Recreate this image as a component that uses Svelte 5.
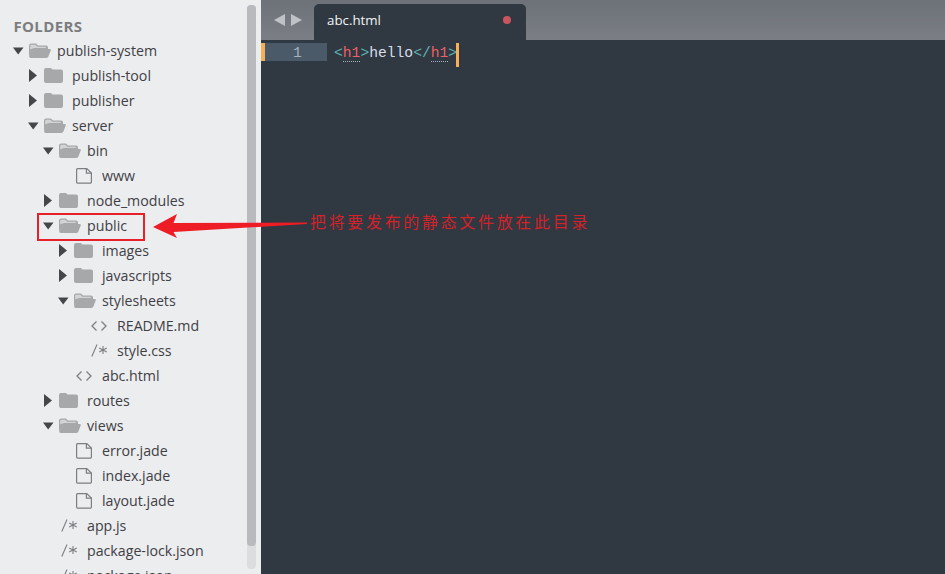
<script>
  const rows = [
    { n: 'publish-system', d: 0, k: 'open' },
    { n: 'publish-tool', d: 1, k: 'closed' },
    { n: 'publisher', d: 1, k: 'closed' },
    { n: 'server', d: 1, k: 'open' },
    { n: 'bin', d: 2, k: 'open' },
    { n: 'www', d: 3, k: 'file' },
    { n: 'node_modules', d: 2, k: 'closed' },
    { n: 'public', d: 2, k: 'open' },
    { n: 'images', d: 3, k: 'closed' },
    { n: 'javascripts', d: 3, k: 'closed' },
    { n: 'stylesheets', d: 3, k: 'open' },
    { n: 'README.md', d: 4, k: 'code' },
    { n: 'style.css', d: 4, k: 'star' },
    { n: 'abc.html', d: 3, k: 'code' },
    { n: 'routes', d: 2, k: 'closed' },
    { n: 'views', d: 2, k: 'open' },
    { n: 'error.jade', d: 3, k: 'file' },
    { n: 'index.jade', d: 3, k: 'file' },
    { n: 'layout.jade', d: 3, k: 'file' },
    { n: 'app.js', d: 2, k: 'star' },
    { n: 'package-lock.json', d: 2, k: 'star' },
    { n: 'package.json', d: 2, k: 'star' }
  ];
</script>

<div class="window">
  <aside class="sidebar">
    <h2 class="title">FOLDERS</h2>
    <ul class="tree">
      {#each rows as r}
        <li class="row" style="padding-left:{13 + r.d * 15}px">
          <span class="twist">
            {#if r.k === 'open'}
              <svg width="11" height="8" viewBox="0 0 11 8"><path d="M0 0.5h10.5L5.2 7.5z" fill="#44464a" /></svg>
            {:else if r.k === 'closed'}
              <svg class="right" width="8" height="13" viewBox="0 0 8 13"><path d="M0 0l8 6.5L0 13z" fill="#44464a" /></svg>
            {/if}
          </span>
          <span class="icon">
            {#if r.k === 'open'}
              <svg width="22" height="15" viewBox="0 0 22 15">
                <path d="M0 2.500A2 2 0 0 1 2 .5h5l2 2h8a2 2 0 0 1 2 2V6H6L0 13z" fill="#a7a8aa" />
                <path d="M1.200 6.500V3A1.200 1.200 0 0 1 2.400 1.800h4l2 2h8.400V5H5z" fill="#d3d4d6" />
                <path d="M5.500 6H20.500a1.200 1.200 0 0 1 1.200 1.600L19.500 13.200A2.400 2.400 0 0 1 17.300 15H2a2 2 0 0 1-2-2z" fill="#a7a8aa" />
              </svg>
            {:else if r.k === 'closed'}
              <svg width="19" height="15" viewBox="0 0 19 15">
                <path d="M0 2a2 2 0 0 1 2-2h5l1.500 1.500H17a2 2 0 0 1 2 2V13a2 2 0 0 1-2 2H2a2 2 0 0 1-2-2z" fill="#a7a8aa" />
              </svg>
            {:else if r.k === 'file'}
              <svg class="leaf" width="17" height="16" viewBox="0 0 17 16" fill="none" stroke="#7d7e82" stroke-width="1.2">
                <path d="M1.600.6h9.200l4.600 4.400v9a1.200 1.200 0 0 1-1.200 1.200H1.600A1.200 1.200 0 0 1 .6 14V1.800A1.200 1.200 0 0 1 1.600.6z" />
                <path d="M10.400.8v4.400h5" />
              </svg>
            {:else if r.k === 'code'}
              <svg class="leaf" width="16" height="12" viewBox="0 0 16 12" fill="none" stroke="#7d7e82" stroke-width="1.300">
                <path d="M5.500 1.500L1 6l4.500 4.500M10.500 1.500L15 6l-4.500 4.500" />
              </svg>
            {:else}
              <svg class="leaf" width="16" height="13" viewBox="0 0 16 13" fill="none" stroke="#7d7e82" stroke-width="1.100">
                <path d="M6 .5L.8 12.500M12 2v8M8.200 4l7.600 4M15.800 4L8.200 8" />
              </svg>
            {/if}
          </span>
          <span class="name">{r.n}</span>
        </li>
      {/each}
    </ul>
    <div class="track"><div class="thumb"></div></div>
  </aside>

  <main class="editor">
    <header class="tabbar">
      <div class="nav">
        <svg width="11" height="14" viewBox="0 0 11 14"><path d="M11 1v12L0 7z" fill="#bfc2c6" /></svg>
        <svg width="11" height="14" viewBox="0 0 11 14"><path d="M0 1v12l11-6z" fill="#bfc2c6" /></svg>
      </div>
      <div class="tab">
        <span class="tabname">abc.html</span>
        <span class="dot"></span>
      </div>
    </header>
    <div class="code">
      <div class="gutter"><span class="mark"></span><span class="num">1</span></div>
      <div class="line"><span class="p">&lt;</span><span class="t">h1</span><span class="p">&gt;</span>hello<span class="p">&lt;/</span><span class="t">h1</span><span class="p">&gt;</span><span class="caret"></span></div>
    </div>
  </main>

  <div class="redbox"></div>
  <svg class="arrow" width="160" height="30" viewBox="0 0 160 30">
    <path d="M1 13L25 0L21.500 9L155 8.500V10L21.500 18L25 24z" fill="#ee1c25" />
  </svg>
  <div class="note">把将要发布的静态文件放在此目录</div>
</div>

<style>
  :global(body) {
    margin: 0;
    overflow: hidden;
  }
  .window {
    position: relative;
    display: flex;
    width: 945px;
    height: 574px;
    overflow: hidden;
    font-family: "Open Sans", sans-serif;
  }
  .sidebar {
    position: relative;
    flex: 0 0 261px;
    background: #ecedef;
    overflow: hidden;
  }
  .title {
    margin: 0;
    height: 38px;
    padding: 17px 0 0 13.500px;
    box-sizing: border-box;
    font-size: 15px;
    line-height: 18px;
    letter-spacing: 0.350px;
    font-weight: 700;
    color: #7c7d80;
  }
  .tree {
    list-style: none;
    margin: 0;
    padding: 0;
  }
  .row {
    display: flex;
    align-items: center;
    height: 25px;
  }
  .twist {
    flex: 0 0 16px;
    display: flex;
    align-items: center;
  }
  .twist svg {
    display: block;
  }
  .twist .right {
    margin-left: 1px;
  }
  .icon {
    flex: 0 0 28px;
    display: flex;
    align-items: center;
  }
  .icon svg {
    display: block;
  }
  .icon .leaf {
    margin-left: 2px;
  }
  .name {
    font-size: 14.200px;
    line-height: 25px;
    color: #3f4045;
    white-space: nowrap;
  }
  .track {
    position: absolute;
    left: 247px;
    top: 5px;
    width: 9px;
    height: 564px;
    background: #dcddde;
    border-radius: 4px;
  }
  .thumb {
    height: 541px;
    background: #b8babe;
    border-radius: 4px;
  }
  .editor {
    flex: 1;
    display: flex;
    flex-direction: column;
    background: #303841;
  }
  .tabbar {
    flex: 0 0 40px;
    display: flex;
    align-items: flex-end;
    background: linear-gradient(#6d7278, #7b7f85);
  }
  .nav {
    flex: 0 0 53px;
    align-self: center;
    display: flex;
    gap: 6px;
    padding-left: 13px;
    box-sizing: border-box;
  }
  .nav svg {
    display: block;
  }
  .tab {
    flex: 0 0 212px;
    height: 36px;
    box-sizing: border-box;
    display: flex;
    align-items: center;
    justify-content: space-between;
    padding: 0 15px 4px 13px;
    background: #303841;
    border-radius: 5px 5px 0 0;
  }
  .tabname {
    font-size: 13.300px;
    color: #f2f4f6;
  }
  .dot {
    width: 8px;
    height: 8px;
    border-radius: 50%;
    background: #c9555f;
  }
  .code {
    display: flex;
    padding-top: 3px;
    height: 24px;
  }
  .gutter {
    flex: 0 0 66px;
    height: 18px;
    display: flex;
    align-items: center;
    background: #4a5a68;
  }
  .mark {
    flex: 0 0 4px;
    height: 18px;
    background: #f9ae58;
  }
  .num {
    flex: 1;
    padding: 2px 0 0 28px;
    font-family: "Liberation Mono", monospace;
    font-size: 14.670px;
    color: #a6b2c0;
  }
  .line {
    display: flex;
    align-items: flex-start;
    padding-left: 7px;
    font-family: "Liberation Mono", monospace;
    font-size: 14.670px;
    line-height: 21px;
    color: #d8dee9;
    white-space: pre;
  }
  .p {
    color: #5fb4b4;
  }
  .t {
    color: #ec5f67;
    height: 18px;
    border-bottom: 1px dotted #a6b2c0;
  }
  .caret {
    width: 3px;
    height: 24px;
    margin-left: -1px;
    background: #f9ae58;
  }
  .redbox {
    position: absolute;
    left: 37px;
    top: 213px;
    width: 108px;
    height: 28px;
    box-sizing: border-box;
    border: 2px solid #e8202a;
  }
  .arrow {
    position: absolute;
    left: 152px;
    top: 214px;
  }
  .note {
    position: absolute;
    left: 310px;
    top: 209px;
    font-family: "Noto Sans CJK SC", sans-serif;
    font-size: 16px;
    line-height: 24px;
    letter-spacing: 2.670px;
    color: #d3222a;
    white-space: nowrap;
  }
</style>
